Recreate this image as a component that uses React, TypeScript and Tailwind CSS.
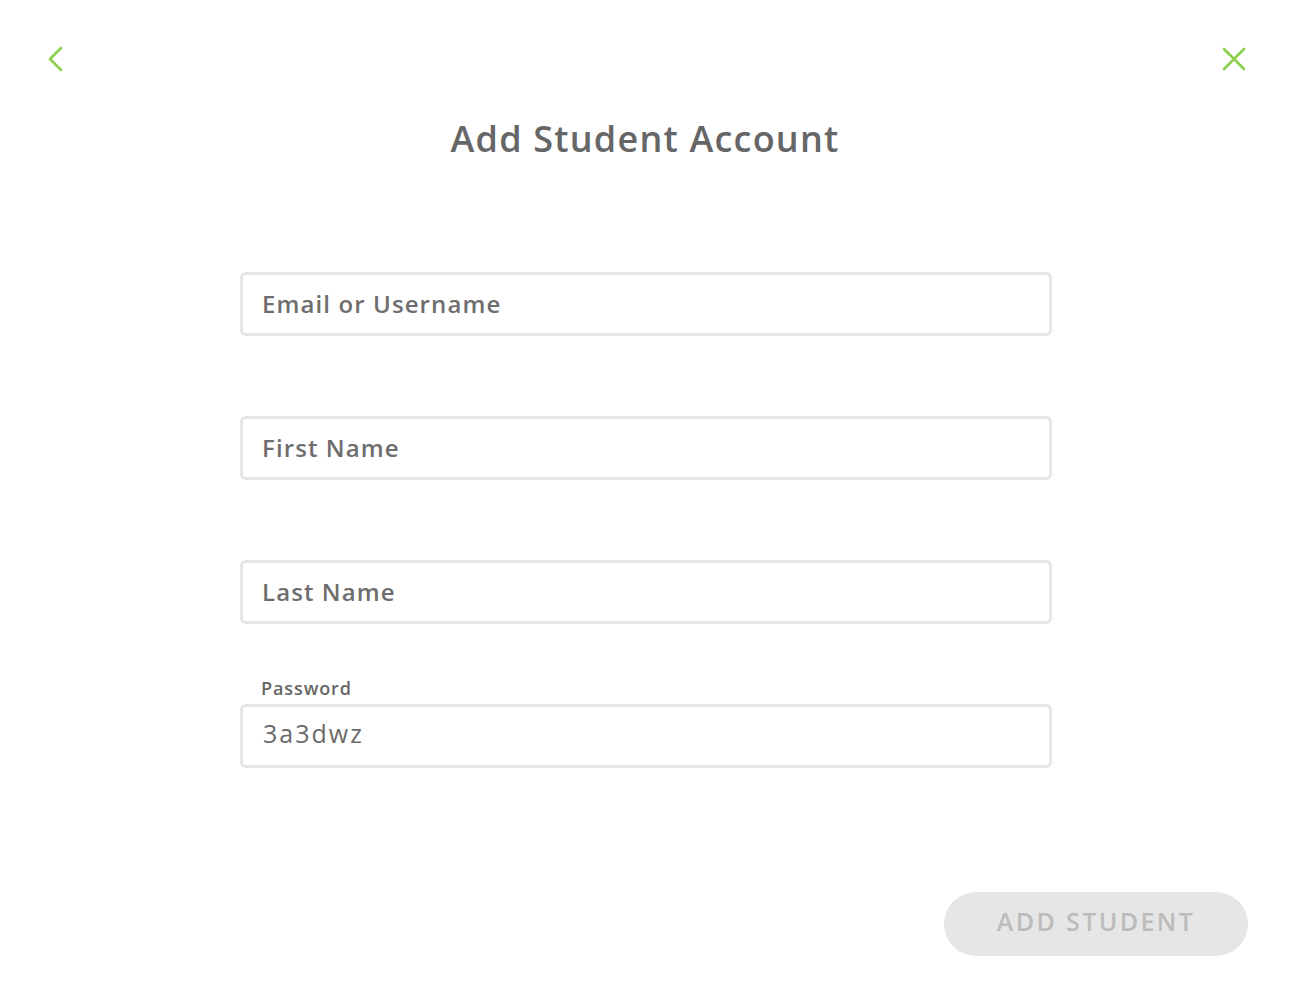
import React from "react";

const font = { fontFamily: '"Open Sans", "Liberation Sans", sans-serif' };

function Field({ placeholder, value, label }: { placeholder?: string; value?: string; label?: string }) {
  return (
    <div className="relative">
      {label && (
        <div className="absolute left-[21px] top-[-29px] text-[18px] font-semibold text-[#666] tracking-[0.9px]">{label}</div>
      )}
      <div className="h-[64px] w-[812px] rounded-[6px] border-[3px] border-[#e6e6e6] flex items-center pl-[19px]">
        {value ? (
          <span className="text-[25px] font-normal text-[#6a6a6a] tracking-[2px] pl-[1px] pb-[4px]">{value}</span>
        ) : (
          <span className="text-[24px] font-semibold text-[#6e6e6e] tracking-[1.1px]">{placeholder}</span>
        )}
      </div>
    </div>
  );
}

export default function App() {
  return (
    <div className="w-[1290px] h-[988px] bg-white flex flex-col" style={font}>
      <div className="flex justify-between items-start px-[45px] pt-[45px]">
        <svg width="20" height="28" viewBox="0 0 20 28" fill="none">
          <path d="M16 3 L5 14 L16 25" stroke="#8ccf4d" strokeWidth="2.6" strokeLinecap="round" strokeLinejoin="round" />
        </svg>
        <svg width="26" height="26" viewBox="0 0 26 26" fill="none" className="mr-[-2px] mt-[1px]">
          <path d="M3 3 L23 23 M23 3 L3 23" stroke="#8ccf4d" strokeWidth="2.6" strokeLinecap="round" />
        </svg>
      </div>
      <h1 className="text-center text-[36px] font-semibold text-[#666] mt-[44px] tracking-[1.2px] leading-[44px]">
        Add Student Account
      </h1>
      <div className="flex flex-col items-center mt-[111px] gap-[80px] ml-[2px]">
        <Field placeholder="Email or Username" />
        <Field placeholder="First Name" />
        <Field placeholder="Last Name" />
        <Field label="Password" value="3a3dwz" />
      </div>
      <div className="flex justify-end pr-[42px] mt-[124px]">
        <button className="w-[304px] h-[64px] rounded-full bg-[#e6e6e6] text-[#bcbcbc] text-[25px] font-semibold tracking-[2.4px] pb-[4px]">
          ADD STUDENT
        </button>
      </div>
    </div>
  );
}
